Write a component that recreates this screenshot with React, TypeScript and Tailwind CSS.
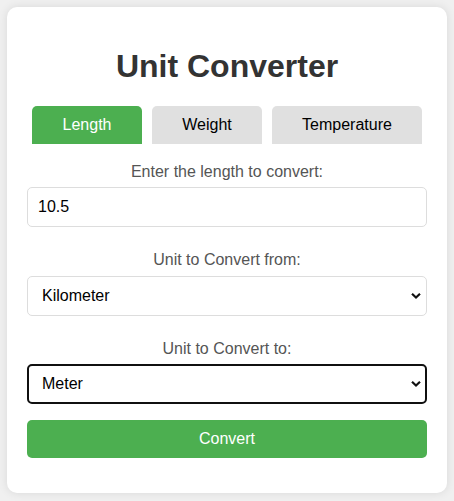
import { useState } from "react"

const tabs = [
  { id: "length", label: "Length", width: "w-[110px]" },
  { id: "weight", label: "Weight", width: "w-[110px]" },
  { id: "temperature", label: "Temperature", width: "w-[150px]" },
]

const Chevron = () => (
  <svg
    className="pointer-events-none absolute right-[6px] top-1/2 -translate-y-1/2"
    width="10"
    height="7"
    viewBox="0 0 10 7"
  >
    <path d="M1 1.2 L5 5 L9 1.2" fill="none" stroke="#111" strokeWidth="2.2" />
  </svg>
)

const App = () => {
  const [active, setActive] = useState("length")
  const [value, setValue] = useState("10.5")
  const [from, setFrom] = useState("Kilometer")
  const [to, setTo] = useState("Meter")

  return (
    <div className="min-h-screen bg-[#f0f0f0] p-[7px] font-['Liberation_Sans',Arial,sans-serif]">
      <div className="w-[440px] rounded-[10px] bg-white px-5 pt-5 pb-[35px] shadow-[0_0_10px_rgba(0,0,0,0.1)]">
        <h1 className="my-[21px] text-center text-[32px] leading-[37px] font-bold text-[#333]">
          Unit Converter
        </h1>

        {/* Tabs */}
        <div className="flex justify-center gap-[10px]">
          {tabs.map((t) => (
            <button
              key={t.id}
              onClick={() => setActive(t.id)}
              className={`${t.width} h-[38px] rounded-t-[5px] text-[16px] leading-[18px] ${
                active === t.id ? "bg-[#4caf50] text-white" : "bg-[#e0e0e0] text-black"
              }`}
            >
              {t.label}
            </button>
          ))}
        </div>

        {/* Value */}
        <label className="mt-[19px] block text-center text-[16px] leading-[18px] text-[#555]">
          Enter the length to convert:
        </label>
        <input
          value={value}
          onChange={(e) => setValue(e.target.value)}
          className="mt-[6px] block h-[40px] w-full rounded-[5px] border border-[#ddd] px-[10px] text-[16px] text-black outline-none"
        />

        {/* From */}
        <label className="mt-[24px] block text-center text-[16px] leading-[18px] text-[#555]">
          Unit to Convert from:
        </label>
        <div className="relative mt-[7px]">
          <select
            value={from}
            onChange={(e) => setFrom(e.target.value)}
            className="block h-[40px] w-full appearance-none rounded-[5px] border border-[#ddd] bg-white pl-[14px] text-[16px] text-black outline-none"
          >
            <option>Kilometer</option>
            <option>Meter</option>
            <option>Centimeter</option>
            <option>Millimeter</option>
          </select>
          <Chevron />
        </div>

        {/* To */}
        <label className="mt-[24px] block text-center text-[16px] leading-[18px] text-[#555]">
          Unit to Convert to:
        </label>
        <div className="relative mt-[6px]">
          <select
            value={to}
            onChange={(e) => setTo(e.target.value)}
            className="block h-[40px] w-full appearance-none rounded-[5px] border-2 border-[#101010] bg-white pl-[13px] text-[16px] text-black outline-none"
          >
            <option>Kilometer</option>
            <option>Meter</option>
            <option>Centimeter</option>
            <option>Millimeter</option>
          </select>
          <Chevron />
        </div>

        <button className="mt-[16px] block h-[38px] w-full rounded-[5px] bg-[#4caf50] text-[16px] text-white">
          Convert
        </button>
      </div>
    </div>
  )
}

export default App
